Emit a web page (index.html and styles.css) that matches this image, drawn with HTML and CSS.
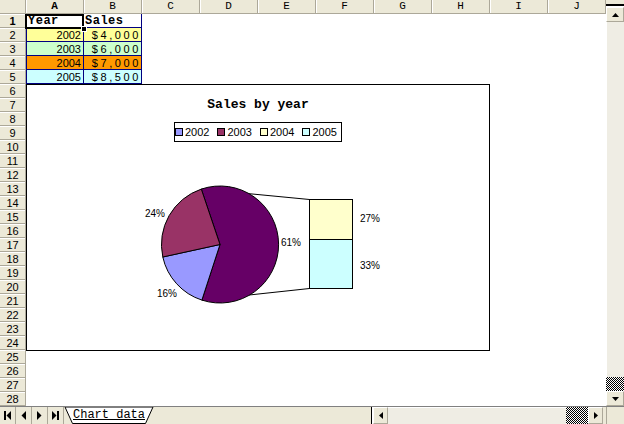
FILE: index.html
```html
<!DOCTYPE html>
<html>
<head>
<meta charset="utf-8">
<link rel="stylesheet" href="styles.css">
</head>
<body>
<div class="app">
  <div class="main">
    <div class="sheet">
      <div class="colheads">
        <div class="corner"></div>
        <div class="ch sel">A</div><div class="ch">B</div><div class="ch">C</div><div class="ch">D</div><div class="ch">E</div>
        <div class="ch">F</div><div class="ch">G</div><div class="ch">H</div><div class="ch">I</div><div class="ch">J</div>
      </div>
      <div class="body">
        <div class="rowheads">
          <div class="rh sel">1</div><div class="rh">2</div><div class="rh">3</div><div class="rh">4</div><div class="rh">5</div>
          <div class="rh">6</div><div class="rh">7</div><div class="rh">8</div><div class="rh">9</div><div class="rh">10</div>
          <div class="rh">11</div><div class="rh">12</div><div class="rh">13</div><div class="rh">14</div><div class="rh">15</div>
          <div class="rh">16</div><div class="rh">17</div><div class="rh">18</div><div class="rh">19</div><div class="rh">20</div>
          <div class="rh">21</div><div class="rh">22</div><div class="rh">23</div><div class="rh">24</div><div class="rh">25</div>
          <div class="rh">26</div><div class="rh">27</div><div class="rh">28</div>
        </div>
        <div class="cells">
          <div class="data">
            <div class="c a hd">Year</div><div class="c hd">Sales</div>
            <div class="c a r2">2002</div><div class="c m r2">$4,000</div>
            <div class="c a r3">2003</div><div class="c m r3">$6,000</div>
            <div class="c a r4">2004</div><div class="c m r4">$7,000</div>
            <div class="c a r5">2005</div><div class="c m r5">$8,500</div>
          </div>
          <div class="selbox"></div>
          <div class="handle"></div>
          <div class="chart">
            <div class="title">Sales by year</div>
            <div class="legend">
              <div class="li"><span class="sw s1"></span>2002</div>
              <div class="li"><span class="sw s2"></span>2003</div>
              <div class="li"><span class="sw s3"></span>2004</div>
              <div class="li"><span class="sw s4"></span>2005</div>
            </div>
            <svg class="plot" width="462" height="207" viewBox="27 142 462 207">
              <g stroke="#000" stroke-width="1" fill="none">
                <line x1="201.3" y1="189.1" x2="309.5" y2="199.5"/>
                <line x1="201.9" y1="300.1" x2="309.5" y2="288.5"/>
              </g>
              <g stroke="#000" stroke-width="1">
                <path fill="#660066" d="M220,244.5 L201.3,189.1 A58.5,58.5 0 1 1 201.9,300.1 Z"/>
                <path fill="#9999FF" d="M220,244.5 L201.9,300.1 A58.5,58.5 0 0 1 162.8,257 Z"/>
                <path fill="#993366" d="M220,244.5 L162.8,257 A58.5,58.5 0 0 1 201.3,189.1 Z"/>
                <rect x="309.5" y="199.5" width="43" height="40" fill="#FFFFCC"/>
                <rect x="309.5" y="239.5" width="43" height="49" fill="#CCFFFF"/>
              </g>
              <g class="lbl">
                <text x="145" y="217">24%</text>
                <text x="157" y="297">16%</text>
                <text x="281" y="246">61%</text>
                <text x="360" y="222">27%</text>
                <text x="360" y="269">33%</text>
              </g>
            </svg>
          </div>
        </div>
      </div>
    </div>
    <div class="vscroll">
      <div class="vsplit"></div>
      <div class="sbtn v"><svg width="7" height="4"><polygon points="3.5,0 7,4 0,4"/></svg></div>
      <div class="vtrack"></div>
      <div class="checker vthumb"></div>
      <div class="sbtn v"><svg width="7" height="4"><polygon points="0,0 7,0 3.5,4"/></svg></div>
    </div>
  </div>
  <div class="bottombar">
    <div class="nav"><svg width="7" height="9"><rect x="0" y="0" width="2" height="9"/><polygon points="7,0 2.5,4.5 7,9"/></svg></div>
    <div class="nav"><svg width="5" height="9"><polygon points="5,0 0.5,4.5 5,9"/></svg></div>
    <div class="nav"><svg width="5" height="9"><polygon points="0,0 4.5,4.5 0,9"/></svg></div>
    <div class="nav"><svg width="7" height="9"><polygon points="0,0 4.5,4.5 0,9"/><rect x="5" y="0" width="2" height="9"/></svg></div>
    <div class="tab">
      <svg class="tabshape" width="90" height="17"><polygon points="1,0 8.5,16.5 81.5,16.5 89,0" fill="#fff" stroke="#000" stroke-width="1"/></svg>
      <span class="tabtext">Chart data</span>
    </div>
    <div class="filler"></div>
    <div class="hsplit"></div>
    <div class="sbtn h"><svg width="4" height="7"><polygon points="4,0 0,3.5 4,7"/></svg></div>
    <div class="htrack"></div>
    <div class="checker hthumb"></div>
    <div class="sbtn h"><svg width="4" height="7"><polygon points="0,0 4,3.5 0,7"/></svg></div>
    <div class="hgap"></div>
    <div class="hcorner"></div>
  </div>
</div>
</body>
</html>
```
FILE: styles.css
```css
body {
  margin: 0;
  width: 624px;
  height: 424px;
  overflow: hidden;
  background: #fff;
  font-family: "Liberation Sans", Arial, sans-serif;
}
.app {
  display: flex;
  flex-direction: column;
  width: 624px;
  height: 424px;
}
.main {
  display: flex;
  height: 406px;
}
.sheet {
  width: 606px;
  display: flex;
  flex-direction: column;
}
.colheads {
  display: flex;
  height: 14px;
  background: #ECE9D8;
}
.corner {
  width: 26px;
  box-sizing: border-box;
  border-right: 1px solid #ACA899;
  border-bottom: 1px solid #ACA899;
}
.ch {
  width: 58px;
  box-sizing: border-box;
  border-right: 1px solid #ACA899;
  border-bottom: 1px solid #ACA899;
  box-shadow: inset 1px 0 #fff;
  text-align: center;
  font: 11px/13px "Liberation Mono", monospace;
  color: #000;
}
.ch.sel { font-weight: bold; }
.body {
  display: flex;
  flex: 1;
}
.rowheads {
  width: 26px;
  display: flex;
  flex-direction: column;
  background: #ECE9D8;
}
.rh {
  height: 14px;
  box-sizing: border-box;
  border-right: 1px solid #ACA899;
  border-bottom: 1px solid #ACA899;
  box-shadow: inset 0 1px #fff;
  text-align: center;
  font: 11px/14px "Liberation Sans", Arial, sans-serif;
}
.rh.sel { font-weight: bold; }
.cells {
  flex: 1;
  position: relative;
  background: #fff;
}
.data {
  display: grid;
  grid-template-columns: 58px 58px;
  grid-auto-rows: 14px;
}
.c {
  box-sizing: border-box;
  border-right: 1px solid #000080;
  border-bottom: 1px solid #000080;
  text-align: right;
  padding-right: 2px;
  font: 11px/14px "Liberation Sans", Arial, sans-serif;
  white-space: nowrap;
}
.c.a { border-left: 1px solid #000080; }
.c.m { letter-spacing: 2.6px; padding-right: 0; }
.c.hd {
  text-align: left;
  padding-left: 1px;
  font: bold 12px/14px "Liberation Mono", monospace;
  letter-spacing: 0.5px;
}
.r2 { background: #FFFF99; }
.r3 { background: #CCFFCC; }
.r4 { background: #FF9900; }
.r5 { background: #CCFFFF; }
.selbox {
  position: absolute;
  left: -1px;
  top: 0;
  width: 59px;
  height: 15px;
  box-sizing: border-box;
  border: 2px solid #000;
}
.handle {
  position: absolute;
  left: 55px;
  top: 12px;
  width: 6px;
  height: 6px;
  box-sizing: border-box;
  background: #000;
  border: 1px solid #fff;
}
.chart {
  position: absolute;
  left: 0;
  top: 70px;
  width: 464px;
  height: 267px;
  box-sizing: border-box;
  border: 1px solid #000;
  background: #fff;
  display: flex;
  flex-direction: column;
  align-items: center;
}
.title {
  margin-top: 12px;
  height: 16px;
  font: bold 13px/16px "Liberation Mono", monospace;
}
.legend {
  margin-top: 9px;
  width: 168px;
  height: 20px;
  box-sizing: border-box;
  border: 1px solid #000;
  display: flex;
  align-items: center;
  gap: 8px;
  padding-left: 0;
  font: 11px/18px "Liberation Sans", Arial, sans-serif;
}
.li {
  display: flex;
  align-items: center;
  gap: 2px;
}
.sw {
  width: 8px;
  height: 8px;
  box-sizing: border-box;
  border: 1px solid #000;
}
.s1 { background: #9999FF; }
.s2 { background: #993366; }
.s3 { background: #FFFFCC; }
.s4 { background: #CCFFFF; }
.plot { display: block; }
.lbl text {
  font: 10px "Liberation Sans", Arial, sans-serif;
  fill: #000;
}
.vscroll {
  width: 18px;
  display: flex;
  flex-direction: column;
  background: #ECE9D8;
}
.vsplit {
  height: 7px;
  background: linear-gradient(#ECE9D8 0 4px, #000 4px 6px, #fff 6px 7px);
}
.sbtn {
  box-sizing: border-box;
  border: 1px solid;
  border-color: #fff #ACA899 #ACA899 #fff;
  background: #ECE9D8;
  display: flex;
  align-items: center;
  justify-content: center;
}
.sbtn.v { height: 15px; }
.sbtn.h { width: 15px; }
.vtrack {
  flex: 1;
  background: #EFEDE4;
  border-left: 1px solid #fff;
}
.checker {
  background: repeating-conic-gradient(#000 0% 25%, #fff 0% 50%) 0 0 / 2px 2px;
}
.vthumb { height: 14px; }
.bottombar {
  height: 18px;
  box-sizing: border-box;
  border-top: 1px solid #808080;
  display: flex;
  background: #ECE9D8;
}
.nav {
  width: 16px;
  box-sizing: border-box;
  border-right: 1px solid #ACA899;
  display: flex;
  align-items: center;
  justify-content: center;
}
.tab {
  width: 90px;
  position: relative;
}
.tabshape {
  position: absolute;
  left: 0;
  top: 0;
}
.tabtext {
  position: relative;
  display: block;
  padding-left: 9px;
  font: 12px/16px "Liberation Mono", monospace;
  text-decoration: underline;
}
.filler { flex: 1; }
.hsplit {
  width: 3px;
  background: linear-gradient(90deg, #ECE9D8 0 1px, #000 1px 2px, #fff 2px 3px);
}
.htrack {
  width: 178px;
  background: #EFEDE4;
  border-top: 1px solid #fff;
}
.hthumb { width: 22px; }
.hgap { width: 3px; }
.hcorner {
  width: 18px;
  box-sizing: border-box;
  border-left: 1px solid #ACA899;
}
```
